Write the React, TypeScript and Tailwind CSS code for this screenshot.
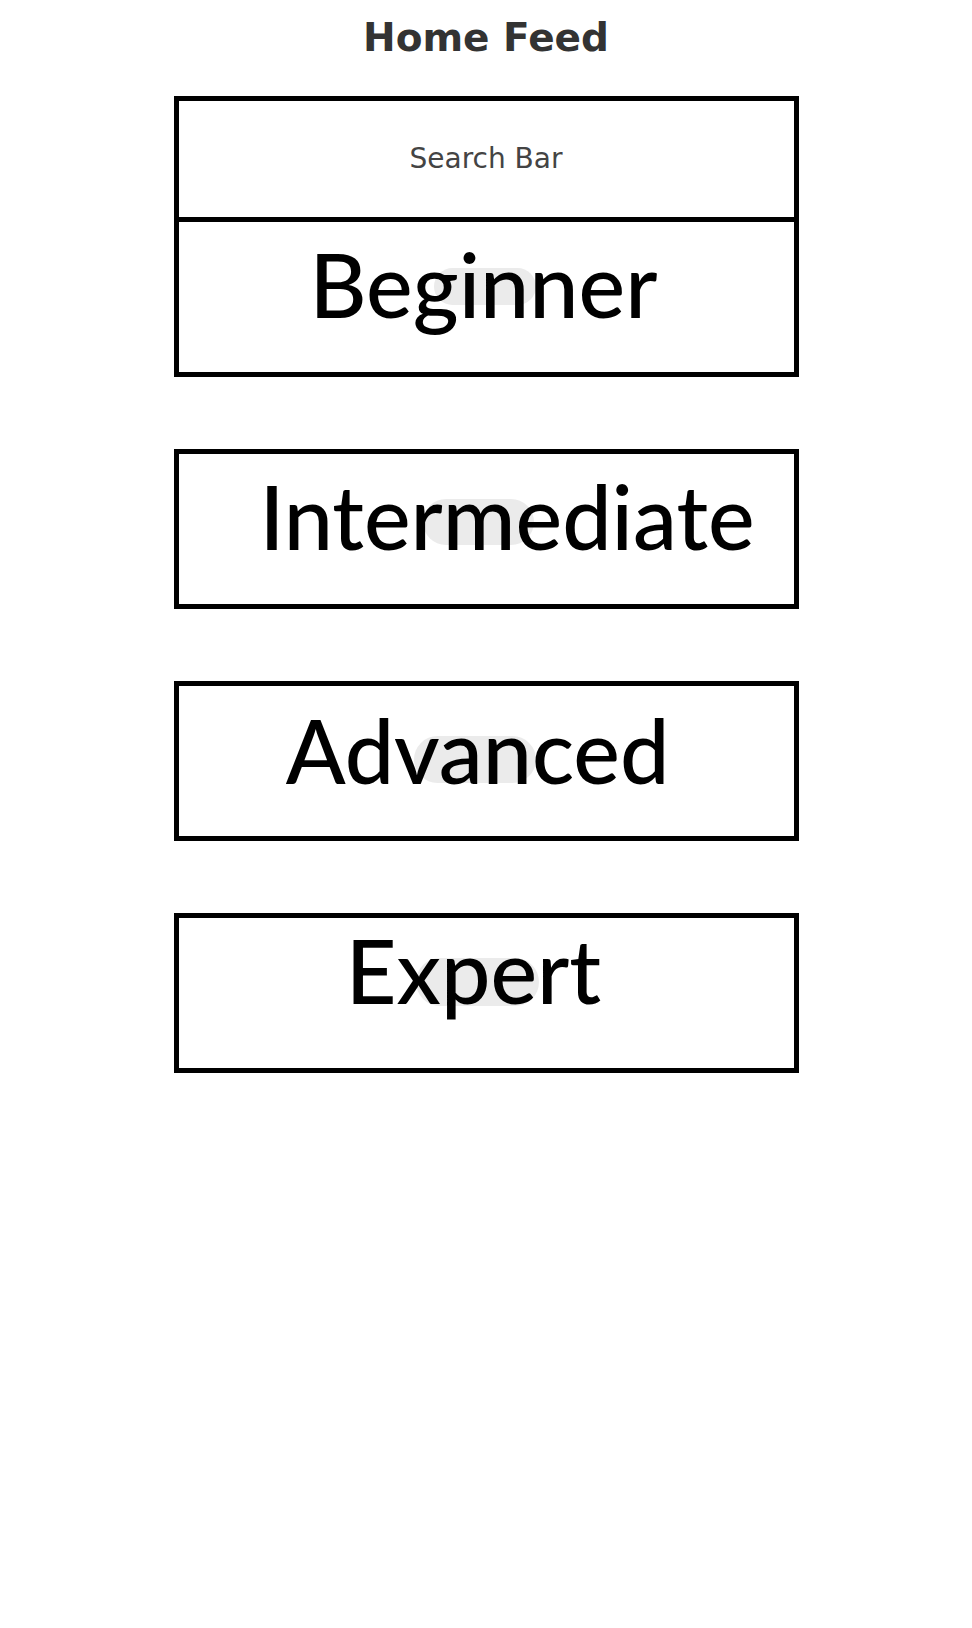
const LEVELS = [
  {
    label: 'Beginner',
    textPos: 'pt-[18px] mr-[5px]',
    pill: 'left-[255px] top-[46px] w-[102px] h-[37px]',
  },
  {
    label: 'Intermediate',
    textPos: 'pt-[18px] ml-[42px]',
    pill: 'left-[244px] top-[45px] w-[111px] h-[46px]',
  },
  {
    label: 'Advanced',
    textPos: 'pt-[20px] mr-[17px]',
    pill: 'left-[235px] top-[50px] w-[122px] h-[47px]',
  },
  {
    label: 'Expert',
    textPos: 'pt-[8px] mr-[25px]',
    pill: 'left-[237px] top-[40px] w-[123px] h-[48px]',
  },
];

function LevelCard({ label, textPos, pill }: { label: string; textPos: string; pill: string }) {
  return (
    <div className="relative h-[160px] border-[5px] border-black bg-white">
      {/* grey placeholder behind the label */}
      <div className={`absolute rounded-full bg-[#ebebeb] ${pill}`} />
      <div className="relative flex justify-center">
        <span
          className={`font-['Lato',sans-serif] text-[88px] font-medium leading-none text-black ${textPos}`}
        >
          {label}
        </span>
      </div>
    </div>
  );
}

export default function App() {
  return (
    <div className="min-h-[1628px] bg-white">
      <h1 className="pt-[9px] text-center font-['DejaVu_Sans',sans-serif] text-[39px] font-bold leading-normal text-[#333333]">
        Home Feed
      </h1>

      <div className="mx-auto mt-[28px] w-[625px]">
        {/* Search bar sits flush on top of the first level card */}
        <div className="flex h-[121px] items-center justify-center border-x-[5px] border-t-[5px] border-black">
          <span className="font-['DejaVu_Sans',sans-serif] text-[28px] leading-normal text-[#444444]">
            Search Bar
          </span>
        </div>

        <div className="flex flex-col gap-[72px]">
          {LEVELS.map((level) => (
            <LevelCard key={level.label} {...level} />
          ))}
        </div>
      </div>
    </div>
  );
}
